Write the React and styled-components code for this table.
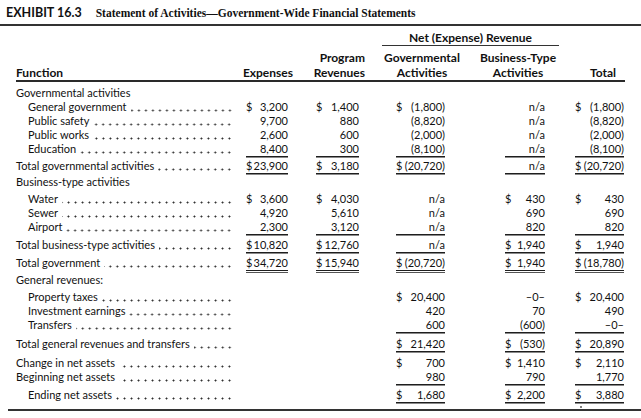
import React from 'react';
import styled, { createGlobalStyle } from 'styled-components';

const Global = createGlobalStyle`
  html, body { margin: 0; padding: 0; background: #fff; }
  body { font-family: Lato, "Liberation Sans", sans-serif; color: #111; }
`;

// column tracks: label | expenses | program | governmental | business | total
const COLS = '230px 42px 71px 86px 100px 79px';
const CELL_W = [42, 43, 49, 40, 49];

const Page = styled.div`
  width: 641px;
  height: 418px;
  box-sizing: border-box;
  padding-top: 5px;
  overflow: hidden;
`;

const TitleBar = styled.div`
  display: flex;
  align-items: baseline;
  gap: 14px;
  padding: 0 0 3px 6px;
  border-bottom: 2px solid #333;
`;

const ExhibitNo = styled.span`
  font: 700 12.5px/15px Lato, "Liberation Sans", sans-serif;
`;

const TitleText = styled.span`
  font: 700 11.5px/15px "Liberation Serif", serif;
`;

const Table = styled.div`
  margin-left: 16px;
  width: 609px;
  font-size: 11px;
`;

const Header = styled.div`
  display: grid;
  grid-template-columns: ${COLS};
  grid-template-rows: auto auto;
  margin-top: 5px;
  border-bottom: 2px solid #2a2a2a;
  font-size: 12px;
  font-weight: 700;
`;

const NetLabel = styled.div`
  grid-row: 1;
  grid-column: 4 / 6;
  margin: 0 -14px 4px 23px;
  line-height: 14px;
  text-align: center;
  border-bottom: 1px solid #333;
  white-space: nowrap;
`;

const HeadCell = styled.div`
  grid-row: 2;
  grid-column: ${p => p.$col};
  display: flex;
  flex-direction: column;
  justify-content: flex-end;
  align-items: ${p => (p.$center ? 'center' : p.$left ? 'flex-start' : 'flex-end')};
  justify-self: ${p => (p.$left ? 'start' : 'end')};
  width: ${p => (p.$w ? `${p.$w}px` : 'auto')};
  margin-right: ${p => p.$mr || 0}px;
  line-height: 15px;
  white-space: nowrap;
`;

const Row = styled.div`
  display: grid;
  grid-template-columns: ${COLS};
  height: 14px;
  line-height: 14px;
  margin-top: ${p => p.$mt || 0}px;
`;

const Label = styled.div`
  display: flex;
  min-width: 0;
  padding-left: ${p => (p.$indent ? 12 : 0)}px;
  padding-right: 13px;
  white-space: nowrap;
`;

const Leader = styled.span`
  flex: 1 1 0;
  min-width: 0;
  margin-left: 4px;
  background-image: radial-gradient(circle at center, #2a2a2a 0.75px, rgba(0, 0, 0, 0) 1.25px);
  background-size: 7px 3px;
  background-repeat: repeat-x;
  background-position: right 0 top 9px;
`;

const Cell = styled.div`
  position: relative;
  grid-column: ${p => p.$col};
  justify-self: end;
  width: ${p => p.$w}px;
  display: flex;
  justify-content: ${p => (p.$dollar ? 'space-between' : 'flex-end')};
  white-space: nowrap;
  box-shadow: ${p =>
    p.$u === 2
      ? '0 1px 0 #1e1e1e, 0 2px 0 #fff, 0 3px 0 #555'
      : p.$u === 1
      ? '0 1px 0 #1e1e1e, 0 2px 0 #8a8a8a'
      : 'none'};
`;

const Speck = styled.span`
  position: absolute;
  left: 5px;
  top: 18px;
  width: 2px;
  height: 2px;
  border-radius: 50%;
  background: #555;
`;

const BottomRule = styled.div`
  margin-top: 7px;
  margin-left: 8px;
  height: 0;
  border-top: 2px solid #333;
`;

// value notation: leading "$" -> separate dollar sign, trailing "_" single underline, "=" double
const parse = raw => {
  if (raw == null) return null;
  let s = raw;
  let u = 0;
  if (s.endsWith('=')) { u = 2; s = s.slice(0, -1); }
  else if (s.endsWith('_')) { u = 1; s = s.slice(0, -1); }
  let dollar = false;
  if (s.startsWith('$')) { dollar = true; s = s.slice(1); }
  return { dollar, text: s, u };
};

const rows = [
  { label: 'Governmental activities', mt: 4 },
  { label: 'General government', indent: true, dots: true, v: ['$3,200', '$1,400', '$(1,800)', 'n/a', '$(1,800)'] },
  { label: 'Public safety', indent: true, dots: true, v: ['9,700', '880', '(8,820)', 'n/a', '(8,820)'] },
  { label: 'Public works', indent: true, dots: true, v: ['2,600', '600', '(2,000)', 'n/a', '(2,000)'] },
  { label: 'Education', indent: true, dots: true, v: ['8,400_', '300_', '(8,100)_', 'n/a_', '(8,100)_'] },
  { label: 'Total governmental activities', dots: true, mt: 3, v: ['$23,900_', '$3,180_', '$(20,720)_', 'n/a_', '$(20,720)_'] },
  { label: 'Business-type activities', mt: 2 },
  { label: 'Water', indent: true, dots: true, mt: 3, v: ['$3,600', '$4,030', 'n/a', '$430', '$430'] },
  { label: 'Sewer', indent: true, dots: true, v: ['4,920', '5,610', 'n/a', '690', '690'] },
  { label: 'Airport', indent: true, dots: true, v: ['2,300_', '3,120_', 'n/a_', '820_', '820_'] },
  { label: 'Total business-type activities', dots: true, mt: 4, v: ['$10,820_', '$12,760_', 'n/a_', '$1,940_', '$1,940_'] },
  { label: 'Total government', dots: true, mt: 4, v: ['$34,720=', '$15,940=', '$(20,720)=', '$1,940=', '$(18,780)='] },
  { label: 'General revenues:', mt: 3 },
  { label: 'Property taxes', indent: true, dots: true, mt: 3, v: [null, null, '$20,400', '–0–', '$20,400'] },
  { label: 'Investment earnings', indent: true, dots: true, v: [null, null, '420', '70', '490'] },
  { label: 'Transfers', indent: true, dots: true, v: [null, null, '600_', '(600)_', '–0–_'] },
  { label: 'Total general revenues and transfers', dots: true, mt: 5, v: [null, null, '$21,420_', '$(530)_', '$20,890_'] },
  { label: 'Change in net assets', dots: true, mt: 5, v: [null, null, '$700', '$1,410', '$2,110'] },
  { label: 'Beginning net assets', dots: true, v: [null, null, '980_', '790_', '1,770_'] },
  { label: 'Ending net assets', indent: true, dots: true, mt: 4, v: [null, null, '$1,680_', '$2,200_', '$3,880_'], speck: true },
];

export default function App() {
  return (
    <>
      <Global />
      <Page>
        <TitleBar>
          <ExhibitNo>EXHIBIT 16.3</ExhibitNo>
          <TitleText>Statement of Activities—Government-Wide Financial Statements</TitleText>
        </TitleBar>
        <Table>
          <Header>
            <NetLabel>Net (Expense) Revenue</NetLabel>
            <HeadCell $col={1} $left>Function</HeadCell>
            <HeadCell $col={2} $mr={-5}>Expenses</HeadCell>
            <HeadCell $col={3} $mr={-6}>
              <span>Program</span>
              <span>Revenues</span>
            </HeadCell>
            <HeadCell $col={4} $center $w={52} $mr={-3}>
              <span>Governmental</span>
              <span>Activities</span>
            </HeadCell>
            <HeadCell $col={5} $center $w={38} $mr={8}>
              <span>Business-Type</span>
              <span>Activities</span>
            </HeadCell>
            <HeadCell $col={6} $mr={8}>Total</HeadCell>
          </Header>
          {rows.map((r, i) => (
            <Row key={i} $mt={r.mt}>
              <Label $indent={r.indent}>
                <span>{r.label}</span>
                {r.dots && <Leader />}
              </Label>
              {(r.v || []).map((raw, j) => {
                const c = parse(raw);
                if (!c) return null;
                return (
                  <Cell key={j} $col={j + 2} $w={CELL_W[j]} $dollar={c.dollar} $u={c.u}>
                    {c.dollar && <span>$</span>}
                    <span>{c.text}</span>
                    {r.speck && j === 4 && <Speck />}
                  </Cell>
                );
              })}
            </Row>
          ))}
        </Table>
        <BottomRule />
      </Page>
    </>
  );
}
